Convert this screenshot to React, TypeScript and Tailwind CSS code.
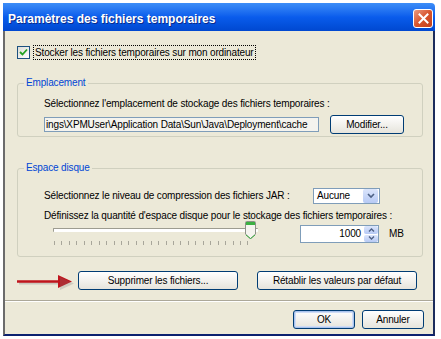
import type { ReactNode } from "react";

const font = { fontFamily: '"Liberation Sans", Arial, sans-serif' };

const XpButton = ({ children, w, primary }: { children: ReactNode; w: string; primary?: boolean }) => (
  <button
    className={`${w} h-[19px] rounded-[3px] border border-[#003c74] bg-gradient-to-b from-white to-[#e6e4dc] text-[10px] tracking-[-0.15px] leading-none text-black flex items-center justify-center ${
      primary ? "shadow-[inset_0_0_0_1px_#a9c3ee,inset_0_0_0_2px_#cfdcf5]" : ""
    }`}
  >
    {children}
  </button>
);

const CloseButton = () => (
  <div className="w-[20px] h-[19px] rounded-[3px] border border-white bg-gradient-to-br from-[#e89a80] via-[#d8542c] to-[#c2401c] flex items-center justify-center">
    <svg width="11" height="11" viewBox="0 0 11 11">
      <path d="M1.5 1.5 L9.5 9.5 M9.5 1.5 L1.5 9.5" stroke="white" strokeWidth="2" strokeLinecap="square" />
    </svg>
  </div>
);

const Group = ({ title, children, h }: { title: string; children: ReactNode; h: string }) => (
  <fieldset className={`${h} border border-[#d0d0bf] rounded-[3px] px-0 pb-0`}>
    <legend className="ml-[6px] px-[2px] text-[10px] leading-[12px] text-[#0046d5]">{title}</legend>
    {children}
  </fieldset>
);

const Slider = () => {
  const ticks = Array.from({ length: 27 }, (_, i) => i);
  return (
    <div className="w-[212px] h-[24px] flex flex-col relative">
      <div className="mt-[5px] ml-[3px] w-[205px] h-[4px] border-t border-l border-[#9d9c90] bg-white rounded-[1px]" />
      <div className="mt-[9px] ml-[4px] flex gap-[6.45px]">
        {ticks.map((t) => (
          <div key={t} className="w-px h-[4px] bg-[#a8a69a]" />
        ))}
      </div>
      <svg className="absolute left-[195px] top-[-2px]" width="11" height="19" viewBox="0 0 11 19">
        <path d="M0.5 1.5 Q0.5 0.5 1.5 0.5 H9.5 Q10.5 0.5 10.5 1.5 V13 L5.5 18 L0.5 13 Z" fill="#f5f4ef" stroke="#8e9189" />
        <rect x="1" y="1" width="9" height="3" fill="#3cb043" />
        <path d="M1 14 L5.5 17.5 L10 14" fill="none" stroke="#3cb043" strokeWidth="1" />
      </svg>
    </div>
  );
};

export default function App() {
  return (
    <div className="w-[441px] h-[339px] bg-white pt-[3px] pl-[3px] overflow-hidden" style={font}>
      <div className="w-[432px] h-[333px] flex flex-col">
        {/* title bar */}
        <div className="h-[28px] bg-gradient-to-b from-[#3d8df7] via-[#0a5cec] to-[#0048d0] flex items-center justify-between pl-[5px] pr-[2px] rounded-tr-[4px]">
          <span className="text-white font-bold text-[12px] pt-[4px] [text-shadow:1px_1px_0_#0a2a8a]">
            Paramètres des fichiers temporaires
          </span>
          <div className="pt-[2px]">
            <CloseButton />
          </div>
        </div>

        {/* body */}
        <div className="flex-1 bg-[#ece9d8] border-l-2 border-l-[#6b6b6b] border-r-2 border-r-[#1c2c5c] border-b-2 border-b-[#0b2170] flex flex-col text-[10px] tracking-[-0.15px] text-black">
          <div className="pl-[12px] pr-[10px] flex flex-col">
            {/* checkbox row */}
            <div className="mt-[14px] flex items-center h-[15px]">
              <div className="w-[13px] h-[13px] border border-[#1c5180] bg-gradient-to-br from-[#dcdcd7] to-white flex items-center justify-center">
                <svg width="9" height="9" viewBox="0 0 9 9">
                  <path d="M1 4 L3.5 6.5 L8 1.5" fill="none" stroke="#21a121" strokeWidth="1.8" />
                </svg>
              </div>
              <span className="ml-[3px] px-[1px] border border-dotted border-black leading-[13px]">
                Stocker les fichiers temporaires sur mon ordinateur
              </span>
            </div>

            {/* Emplacement */}
            <div className="mt-[17px]">
              <Group title="Emplacement" h="h-[60px]">
                <div className="pl-[26px] pt-[9px] leading-[12px]">
                  Sélectionnez l'emplacement de stockage des fichiers temporaires :
                </div>
                <div className="pl-[26px] pt-[5px] flex items-center gap-[11px]">
                  <div className="w-[275px] h-[15px] border border-[#7f9db9] bg-[#f4f3ee] overflow-hidden whitespace-nowrap leading-[13px] pl-[1px]">
                    ings\XPMUser\Application Data\Sun\Java\Deployment\cache
                  </div>
                  <XpButton w="w-[74px]">Modifier...</XpButton>
                </div>
              </Group>
            </div>

            {/* Espace disque */}
            <div className="mt-[25px]">
              <Group title="Espace disque" h="h-[95px]">
                <div className="pl-[26px] pt-[14px] flex items-center">
                  <span className="w-[269px] leading-[12px]">Sélectionnez le niveau de compression des fichiers JAR :</span>
                  <div className="w-[67px] h-[16px] border border-[#7f9db9] bg-white flex items-center">
                    <span className="flex-1 pl-[3px] leading-none">Aucune</span>
                    <div className="w-[15px] h-[14px] mr-px rounded-[2px] bg-gradient-to-b from-[#dbe5fb] to-[#b7caf5] flex items-center justify-center">
                      <svg width="8" height="6" viewBox="0 0 8 6">
                        <path d="M1 1 L4 4 L7 1" fill="none" stroke="#4d6185" strokeWidth="1.6" />
                      </svg>
                    </div>
                  </div>
                </div>
                <div className="pl-[26px] pt-[6px] leading-[12px] whitespace-nowrap">
                  Définissez la quantité d'espace disque pour le stockage des fichiers temporaires :
                </div>
                <div className="pl-[32px] pt-[1px] flex items-start">
                  <Slider />
                  <div className="ml-[38px] mt-[2px] w-[79px] h-[18px] border border-[#7f9db9] bg-white flex items-center">
                    <span className="flex-1 text-right pr-[3px] leading-none">1000</span>
                    <div className="w-[14px] h-[16px] flex flex-col gap-px">
                      <div className="flex-1 rounded-[2px] bg-gradient-to-b from-[#dbe5fb] to-[#b7caf5] flex items-center justify-center">
                        <svg width="7" height="4" viewBox="0 0 7 4">
                          <path d="M1 3.5 L3.5 1 L6 3.5" fill="none" stroke="#4d6185" strokeWidth="1.4" />
                        </svg>
                      </div>
                      <div className="flex-1 rounded-[2px] bg-gradient-to-b from-[#dbe5fb] to-[#b7caf5] flex items-center justify-center">
                        <svg width="7" height="4" viewBox="0 0 7 4">
                          <path d="M1 0.5 L3.5 3 L6 0.5" fill="none" stroke="#4d6185" strokeWidth="1.4" />
                        </svg>
                      </div>
                    </div>
                  </div>
                  <span className="ml-[10px] mt-[5px] leading-[12px]">MB</span>
                </div>
              </Group>
            </div>

            {/* action buttons */}
            <div className="mt-[14px] flex items-center">
              <svg width="62" height="19" viewBox="0 0 62 19" className="ml-[-1px]">
                <path d="M3 12 H46" stroke="#8a8a8a" strokeWidth="3" opacity="0.35" />
                <path d="M1 10.5 H45" stroke="#c0141c" strokeWidth="2.5" />
                <path d="M42 4 L56 10.5 L42 17 Z" fill="#c0141c" />
                <path d="M44 6 L58 12.5 L44 19 Z" fill="#777" opacity="0.25" />
              </svg>
              <div>
                <XpButton w="w-[160px]">Supprimer les fichiers...</XpButton>
              </div>
              <div className="ml-[19px]">
                <XpButton w="w-[160px]">Rétablir les valeurs par défaut</XpButton>
              </div>
            </div>
          </div>

          {/* separator */}
          <div className="mt-[10px] h-[2px] border-t border-[#aca899] border-b border-b-white" />

          <div className="mt-[8px] flex justify-end pr-[9px] gap-[7px]">
            <XpButton w="w-[62px]" primary>
              OK
            </XpButton>
            <XpButton w="w-[62px]">Annuler</XpButton>
          </div>
        </div>
      </div>
    </div>
  );
}
